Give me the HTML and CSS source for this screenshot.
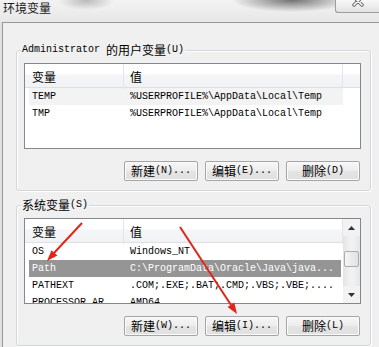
FILE: index.html
```html
<!DOCTYPE html>
<html lang="zh-CN">
<head>
    <meta charset="UTF-8">
    <meta name="viewport" content="width=device-width, initial-scale=1.0">
    <title>环境变量</title>
    <link rel="stylesheet" href="styles.css">
</head>
<body>
    <div class="titlebar">
        <span class="title">环境变量</span>
        <div class="close-btn">
            <svg width="12" height="8" viewBox="0 0 12 8">
                <path d="M2 -3 L10 5 M10 -3 L2 5" stroke="#6b6b6b" stroke-width="3.5" stroke-linecap="round"/>
                <path d="M2 -3 L10 5 M10 -3 L2 5" stroke="#ffffff" stroke-width="1.6" stroke-linecap="round"/>
            </svg>
        </div>
    </div>

    <div class="client">
        <!-- User variables -->
        <fieldset class="group">
            <legend>Administrator <span class="cjk">的用户变量</span>(U)</legend>
            <div class="list list-user">
                <div class="list-main">
                    <div class="list-header">
                        <div class="col-name"><span class="cjk">变量</span></div>
                        <div class="col-value"><span class="cjk">值</span></div>
                        <div class="col-fill"></div>
                    </div>
                    <div class="row hover">
                        <div class="cell-name">TEMP</div>
                        <div class="cell-value">%USERPROFILE%\AppData\Local\Temp</div>
                    </div>
                    <div class="row">
                        <div class="cell-name">TMP</div>
                        <div class="cell-value">%USERPROFILE%\AppData\Local\Temp</div>
                    </div>
                </div>
            </div>
            <div class="buttons">
                <button><span class="cjk">新建</span>(N)...</button>
                <button><span class="cjk">编辑</span>(E)...</button>
                <button><span class="cjk">删除</span>(D)</button>
            </div>
        </fieldset>

        <!-- System variables -->
        <fieldset class="group">
            <legend><span class="cjk">系统变量</span>(S)</legend>
            <div class="list">
                <div class="list-main">
                    <div class="list-header">
                        <div class="col-name"><span class="cjk">变量</span></div>
                        <div class="col-value"><span class="cjk">值</span></div>
                        <div class="col-fill"></div>
                    </div>
                    <div class="row">
                        <div class="cell-name">OS</div>
                        <div class="cell-value">Windows_NT</div>
                    </div>
                    <div class="row selected">
                        <div class="cell-name">Path</div>
                        <div class="cell-value">C:\ProgramData\Oracle\Java\java...</div>
                    </div>
                    <div class="row">
                        <div class="cell-name">PATHEXT</div>
                        <div class="cell-value">.COM;.EXE;.BAT;.CMD;.VBS;.VBE;....</div>
                    </div>
                    <div class="row">
                        <div class="cell-name">PROCESSOR_AR</div>
                        <div class="cell-value">AMD64</div>
                    </div>
                </div>
                <div class="scrollbar">
                    <div class="scroll-btn">
                        <svg width="7" height="4" viewBox="0 0 7 4"><polygon points="0,4 3.5,0 7,4" fill="#333"/></svg>
                    </div>
                    <div class="scroll-track">
                        <div class="scroll-thumb"></div>
                    </div>
                    <div class="scroll-btn">
                        <svg width="7" height="4" viewBox="0 0 7 4"><polygon points="0,0 3.5,4 7,0" fill="#333"/></svg>
                    </div>
                </div>
            </div>
            <div class="buttons">
                <button><span class="cjk">新建</span>(W)...</button>
                <button><span class="cjk">编辑</span>(I)...</button>
                <button><span class="cjk">删除</span>(L)</button>
            </div>
        </fieldset>
    </div>

    <!-- Annotation arrows -->
    <svg class="arrows" width="379" height="347" viewBox="0 0 379 347">
        <line x1="82" y1="223" x2="54" y2="253" stroke="#e0251b" stroke-width="2"/>
        <polygon points="47,261 57.4,255.6 51.5,250.2" fill="#e0251b"/>
        <line x1="180" y1="227" x2="231" y2="305" stroke="#e0251b" stroke-width="2"/>
        <polygon points="237,314 234.3,302.6 227.6,307" fill="#e0251b"/>
    </svg>
</body>
</html>
```

FILE: styles.css
```css
body {
    margin: 0;
    width: 379px;
    height: 347px;
    overflow: hidden;
    position: relative;
    background-color: #e0e0e0;
    font-family: "Liberation Mono", "Noto Sans CJK SC", monospace;
    font-size: 10px;
    color: #000;
}
.cjk {
    font-family: "Noto Sans CJK SC", sans-serif;
    font-size: 12px;
    vertical-align: top;
}
.titlebar {
    height: 22px;
    display: flex;
    justify-content: space-between;
    align-items: flex-start;
    background:
        radial-gradient(ellipse 60px 12px at 292px 0, rgba(90, 90, 90, 0.85), rgba(90, 90, 90, 0)),
        radial-gradient(ellipse 28px 9px at 86px 1px, rgba(150, 150, 150, 0.6), rgba(150, 150, 150, 0)),
        linear-gradient(#f3f3f3, #e7e7e7);
}
.title {
    font-family: "Noto Sans CJK SC", sans-serif;
    font-size: 12px;
    line-height: 16px;
    padding-left: 3px;
    color: #1a1a1a;
}
.close-btn {
    width: 43px;
    height: 12px;
    border-left: 1px solid #9c9c9c;
    border-bottom: 1px solid #9c9c9c;
    border-bottom-left-radius: 3px;
    background: linear-gradient(#f8f8f8, #e2e2e2);
    display: flex;
    justify-content: center;
}
.client {
    margin-left: 2px;
    height: 325px;
    border-top: 1px solid #999;
    border-left: 1px solid #999;
    background-color: #f0f0f0;
    overflow: hidden;
}
.group {
    width: 355px;
    min-width: 0;
    box-sizing: border-box;
    margin: 20px 0 0 13px;
    padding: 6px 9px 9px 7px;
    border: 1px solid #d3d7db;
    border-radius: 3px;
    box-shadow: inset 1px 1px 0 #fff, 1px 1px 0 #fff;
}
.group + .group {
    margin-top: 7px;
}
.group legend {
    margin-left: -3px;
    padding: 0 1px;
    line-height: 14px;
    background-color: #f0f0f0;
}
.list {
    display: flex;
    height: 86px;
    box-sizing: border-box;
    border: 1px solid #828790;
    background-color: #fff;
    overflow: hidden;
}
.list-main {
    flex: 1;
    min-width: 0;
    overflow: hidden;
}
.list-header {
    display: grid;
    grid-template-columns: 99px 219px 1fr;
    height: 24px;
    box-sizing: border-box;
    background: linear-gradient(#ffffff 0%, #ffffff 45%, #f5f6f7 46%, #f1f2f4 100%);
    border-bottom: 1px solid #dde0e4;
}
.list-header div {
    padding-left: 7px;
    line-height: 25px;
    border-right: 1px solid #e2e5e9;
}
.list-header .col-value {
    padding-left: 6px;
}
.list-header .col-fill {
    border-right: none;
}
.row {
    display: grid;
    grid-template-columns: 95px 1fr;
    height: 17px;
    line-height: 17px;
    margin: 0 2px 0 4px;
    white-space: nowrap;
}
.list-user .row {
    margin-right: 17px;
}
.cell-name {
    padding-left: 3px;
    overflow: hidden;
}
.cell-value {
    padding-left: 6px;
    overflow: hidden;
}
.row.hover {
    background-color: #f3f3f3;
}
.row.selected {
    background-color: #959595;
    color: #fff;
}
.scrollbar {
    width: 17px;
    flex-shrink: 0;
    display: flex;
    flex-direction: column;
    background: linear-gradient(90deg, #e4e4e4, #f1f1f1 40%, #f1f1f1 60%, #e6e6e6);
}
.scroll-btn {
    height: 17px;
    display: flex;
    align-items: center;
    justify-content: center;
    background-color: #f2f2f2;
}
.scroll-track {
    flex: 1;
    padding: 15px 1px 0;
}
.scroll-thumb {
    height: 14px;
    border: 1px solid #ababab;
    border-radius: 2px;
    background: linear-gradient(90deg, #f5f5f5, #e2e2e2);
}
.buttons {
    display: flex;
    justify-content: flex-end;
    gap: 7px;
    margin: 12px 1px 0 0;
}
.buttons button {
    width: 74px;
    height: 20px;
    padding: 0;
    font-family: "Liberation Mono", "Noto Sans CJK SC", monospace;
    font-size: 10px;
    line-height: 18px;
    color: #000;
    border: 1px solid #a5a5a5;
    border-radius: 2px;
    background: linear-gradient(#f7f7f7, #ececec 50%, #e4e4e4 51%, #e0e0e0);
    box-shadow: inset 0 0 0 1px #fbfbfb;
}
.arrows {
    position: absolute;
    top: 0;
    left: 0;
    pointer-events: none;
}
```
